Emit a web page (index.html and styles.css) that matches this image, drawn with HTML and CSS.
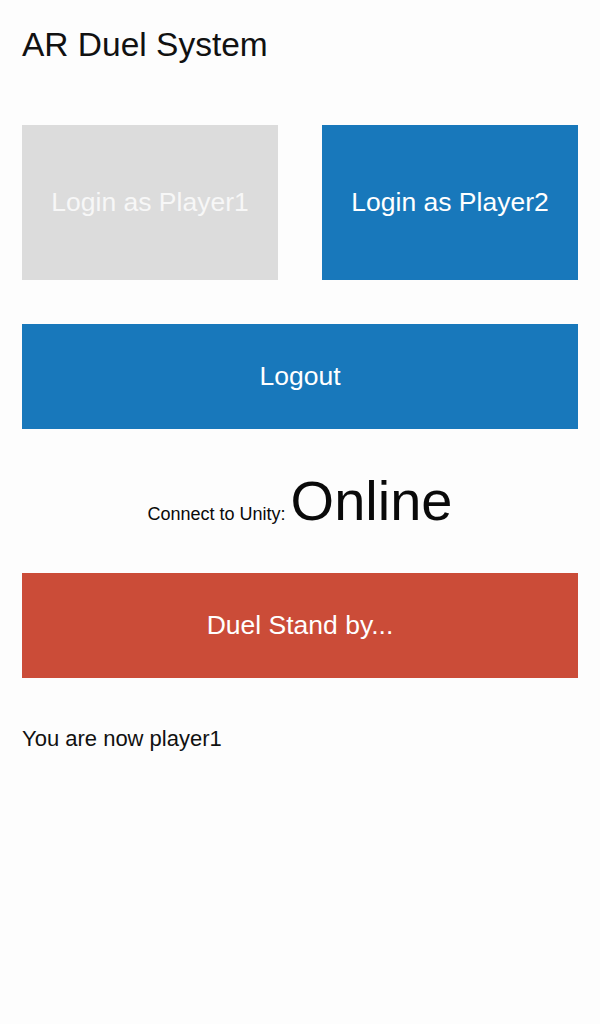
FILE: index.html
```html
<!DOCTYPE html>
<html lang="en">
<head>
<meta charset="utf-8">
<title>AR Duel System</title>
<link rel="stylesheet" href="styles.css">
</head>
<body>
<main class="page">
  <h1 class="title">AR Duel System</h1>
  <div class="login-row">
    <button class="btn btn-disabled">Login as Player1</button>
    <button class="btn btn-blue">Login as Player2</button>
  </div>
  <button class="btn btn-blue btn-wide">Logout</button>
  <div class="status"><span class="status-label">Connect to Unity:</span><span class="status-value">Online</span></div>
  <button class="btn btn-red btn-wide">Duel Stand by...</button>
  <p class="note">You are now player1</p>
</main>
</body>
</html>
```
FILE: styles.css
```css
html, body {
  margin: 0;
  padding: 0;
  background: #fdfdfd;
}
body {
  font-family: "Liberation Sans", Arial, sans-serif;
  color: #111;
}
.page {
  padding: 0 22px;
  display: flex;
  flex-direction: column;
}
.title {
  margin: 26px 0 0;
  font-size: 33.5px;
  font-weight: normal;
  line-height: 38px;
}
.login-row {
  margin-top: 61px;
  display: grid;
  grid-template-columns: 1fr 1fr;
  column-gap: 44px;
}
.btn {
  border: none;
  margin: 0;
  padding: 0;
  font-family: inherit;
  font-size: 26.5px;
  color: #fff;
  height: 155px;
  display: flex;
  align-items: center;
  justify-content: center;
}
.btn-disabled {
  background: #dcdcdc;
  color: #f7f7f7;
}
.btn-blue {
  background: #1878bb;
}
.btn-red {
  background: #cb4c38;
}
.btn-wide {
  height: 105px;
  margin-top: 44px;
  width: 100%;
}
.status {
  margin-top: 40px;
  text-align: center;
  font-size: 56px;
  line-height: 64px;
  color: #0a0a0a;
}
.status-label {
  font-size: 18px;
  line-height: 1;
  margin-right: 5px;
}
.status-value {
  line-height: 1;
}
.status + .btn-wide {
  margin-top: 40px;
}
.note {
  margin: 48px 0 0;
  font-size: 22px;
  line-height: 26px;
}
```
